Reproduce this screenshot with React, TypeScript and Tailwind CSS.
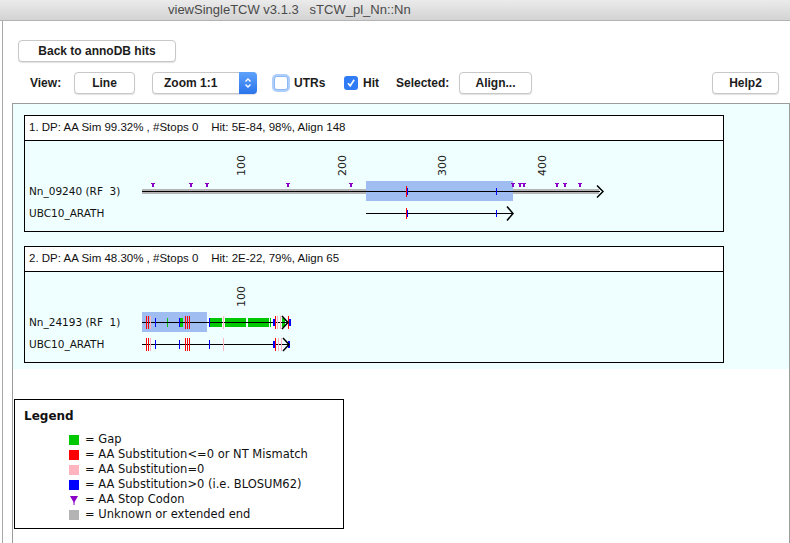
import React from "react";

const PURPLE = "#8a00c8";
const RED = "#ff0000";
const PINK = "#ffb4c0";
const BLUE = "#0000ff";
const GREEN = "#00c800";

function Btn({ children, className }: { children: React.ReactNode; className?: string }) {
  return (
    <button
      className={`h-[22px] bg-white border border-[#c8c8c8] rounded-[4px] shadow-[0_1px_1px_rgba(0,0,0,0.12)] text-[12px] font-bold text-[#1c1c1c] flex items-center justify-center ${className ?? ""}`}
    >
      {children}
    </button>
  );
}

function VTicks({ xs, y1, y2, color, w = 1 }: { xs: number[]; y1: number; y2: number; color: string; w?: number }) {
  return (
    <>
      {xs.map((x, i) => (
        <rect key={i} x={x} y={y1} width={w} height={y2 - y1} fill={color} />
      ))}
    </>
  );
}

// little purple "T" marks for stop codons
function Stops({ xs }: { xs: number[] }) {
  return (
    <>
      {xs.map((x, i) => (
        <g key={i} fill={PURPLE}>
          <rect x={x - 1} y={184} width={4} height={1} />
          <rect x={x} y={184} width={2} height={4} />
        </g>
      ))}
    </>
  );
}

function Ruler({ marks }: { marks: [string, number, number][] }) {
  return (
    <>
      {marks.map(([t, x, y]) => (
        <text key={t} transform={`translate(${x},${y}) rotate(-90)`} fontSize={11} fill="#222">
          {t}
        </text>
      ))}
    </>
  );
}

function Track1() {
  return (
    <svg width={698} height={90} viewBox="25 142 698 90" className="block font-['DejaVu_Sans',sans-serif]">
      <text x={29} y={196} fontSize={10.5} fill="#111" className="whitespace-pre">Nn_09240 (RF  3)</text>
      <text x={29} y={218} fontSize={10.5} fill="#111">UBC10_ARATH</text>
      <Ruler marks={[["100", 245, 177], ["200", 346, 177], ["300", 446, 177], ["400", 546, 177]]} />
      <rect x={142} y={190} width={224} height={5} fill="#b4b4b4" />
      <rect x={513} y={190} width={86} height={5} fill="#b4b4b4" />
      <rect x={366} y={182} width={147} height={20} fill="#9fbdf0" />
      <rect x={142} y={192} width={458} height={1} fill="#000" />
      <polyline points="597,186.5 603,192.5 597,198.5" stroke="#000" strokeWidth={1.5} fill="none" />
      <Stops xs={[152, 190, 206, 287, 350, 512, 519, 523, 556, 564, 579]} />
      <VTicks xs={[406]} y1={187} y2={198} color={RED} />
      <VTicks xs={[407]} y1={189} y2={196} color={BLUE} />
      <VTicks xs={[496]} y1={189} y2={196} color={BLUE} />

      <rect x={366} y={214} width={147} height={1} fill="#000" />
      <polyline points="507,207.5 513,214.5 507,221.5" stroke="#000" strokeWidth={1.5} fill="none" />
      <VTicks xs={[406]} y1={209} y2={220} color={RED} />
      <VTicks xs={[407]} y1={211} y2={218} color={BLUE} />
      <VTicks xs={[496]} y1={211} y2={218} color={BLUE} />
    </svg>
  );
}

function Track2() {
  return (
    <svg width={698} height={90} viewBox="25 274 698 90" className="block font-['DejaVu_Sans',sans-serif]">
      <text x={29} y={328} fontSize={10.5} fill="#111" className="whitespace-pre">Nn_24193 (RF  1)</text>
      <text x={29} y={350} fontSize={10.5} fill="#111">UBC10_ARATH</text>
      <Ruler marks={[["100", 245, 309]]} />
      <rect x={142} y={314} width={65} height={20} fill="#9fbdf0" />
      <rect x={210} y={320} width={12} height={9} fill={GREEN} />
      <rect x={225} y={320} width={21} height={9} fill={GREEN} />
      <rect x={248} y={320} width={21} height={9} fill={GREEN} />
      <rect x={180} y={320} width={3} height={9} fill={GREEN} />
      <rect x={282} y={320} width={3} height={9} fill={GREEN} />
      <VTicks xs={[167, 270]} y1={320} y2={329} color={GREEN} />
      <rect x={142} y={324} width={146} height={1} fill="#000" />
      <VTicks xs={[146, 148, 185, 187, 189, 275, 288]} y1={318} y2={331} color={RED} />
      <VTicks xs={[150, 223, 277, 280]} y1={318} y2={331} color={PINK} />
      <VTicks xs={[155, 179, 209]} y1={320} y2={329} color={BLUE} />
      <VTicks xs={[273, 289]} y1={321} y2={328} color={BLUE} w={2} />
      <polyline points="282,318 288,324.5 282,331" stroke="#000" strokeWidth={1.5} fill="none" />

      <rect x={142} y={346} width={146} height={1} fill="#000" />
      <VTicks xs={[146, 148, 185, 187, 189, 275]} y1={340} y2={353} color={RED} />
      <VTicks xs={[150, 223, 278, 281]} y1={340} y2={353} color={PINK} />
      <VTicks xs={[155, 179, 209]} y1={342} y2={351} color={BLUE} />
      <VTicks xs={[273, 288]} y1={343} y2={350} color={BLUE} w={2} />
      <polyline points="283,340 289,346.5 283,353" stroke="#000" strokeWidth={1.5} fill="none" />
    </svg>
  );
}

function Card({ title, children }: { title: string; children: React.ReactNode }) {
  return (
    <div className="w-[700px] border border-black bg-[#efffff]">
      <div className="h-[25px] border-b border-black bg-white pl-[4px] flex items-center text-[11.5px] text-[#111] whitespace-pre">
        {title}
      </div>
      {children}
    </div>
  );
}

const legend: { color: string; label: string; stop?: boolean }[] = [
  { color: "bg-[#00c800]", label: "= Gap" },
  { color: "bg-[#ff0000]", label: "= AA Substitution<=0 or NT Mismatch" },
  { color: "bg-[#ffb4c0]", label: "= AA Substitution=0" },
  { color: "bg-[#0000ff]", label: "= AA Substitution>0 (i.e. BLOSUM62)" },
  { color: "", label: "= AA Stop Codon", stop: true },
  { color: "bg-[#b4b4b4]", label: "= Unknown or extended end" },
];

export default function App() {
  return (
    <div className="w-[790px] h-[543px] overflow-hidden bg-white flex flex-col font-['Liberation_Sans',Arial,sans-serif]">
      <div className="h-[21px] shrink-0 bg-gradient-to-b from-[#ebebeb] to-[#d3d3d3] border-b border-[#b3b3b3] pl-[168px] flex items-center text-[13px] text-[#4a4a4a] whitespace-pre">
        viewSingleTCW v3.1.3   sTCW_pl_Nn::Nn
      </div>

      <div className="flex-1 ml-[2px] border-l border-[#a8a8a8] flex flex-col min-h-0">
        <Btn className="mt-[19px] ml-[15px] w-[158px]">Back to annoDB hits</Btn>

        <div className="mt-[10px] h-[22px] flex items-center pl-[27px] pr-[11px] text-[12px] font-bold text-[#1c1c1c]">
          <span className="w-[44px]">View:</span>
          <Btn className="w-[61px]">Line</Btn>
          <div className="ml-[17px] w-[105px] h-[22px] bg-white border border-[#c8c8c8] rounded-[4px] shadow-[0_1px_1px_rgba(0,0,0,0.12)] flex items-stretch">
            <span className="flex-1 pl-[11px] flex items-center">Zoom 1:1</span>
            <span className="w-[18px] -my-px -mr-px rounded-r-[4px] bg-gradient-to-b from-[#5fa2fb] to-[#2a74ec] flex items-center justify-center">
              <svg width="8" height="12" viewBox="0 0 8 12" fill="none" stroke="#fff" strokeWidth="1.4">
                <polyline points="1.5,4.5 4,2 6.5,4.5" />
                <polyline points="1.5,7.5 4,10 6.5,7.5" />
              </svg>
            </span>
          </div>
          <span className="ml-[17px] w-[14px] h-[14px] rounded-[3px] bg-white border border-[#8cb8f6] shadow-[0_0_0_2px_rgba(110,165,245,0.55)]" />
          <span className="ml-[6px] w-[50px]">UTRs</span>
          <span className="w-[14px] h-[14px] rounded-[3px] bg-[#2f7cf6] flex items-center justify-center">
            <svg width="10" height="10" viewBox="0 0 10 10" fill="none" stroke="#fff" strokeWidth="1.6">
              <polyline points="2,5.2 4.2,7.8 8.2,1.8" />
            </svg>
          </span>
          <span className="ml-[5px] w-[33px]">Hit</span>
          <span className="w-[63px]">Selected:</span>
          <Btn className="w-[73px]">Align...</Btn>
          <Btn className="ml-auto w-[67px]">Help2</Btn>
        </div>

        <div className="mt-[9px] ml-[9px] flex-1 border border-[#9c9c9c] border-b-0 flex flex-col">
          <div className="h-[265px] bg-[#efffff] pl-[11px] pt-[11px] flex flex-col gap-[14px]">
            <Card title="1. DP: AA Sim 99.32% , #Stops 0    Hit: 5E-84, 98%, Align 148">
              <Track1 />
            </Card>
            <Card title="2. DP: AA Sim 48.30% , #Stops 0    Hit: 2E-22, 79%, Align 65">
              <Track2 />
            </Card>
          </div>

          <div className="mt-[30px] ml-[1px] w-[330px] h-[130px] border border-black pt-[9px] pl-[9px] font-['DejaVu_Sans',sans-serif] text-[#111]">
            <div className="text-[12px] font-bold leading-[15px]">Legend</div>
            <div className="mt-[8px] ml-[45px] flex flex-col">
              {legend.map((l) => (
                <div key={l.label} className="h-[15px] flex items-center text-[11.5px] whitespace-pre">
                  {l.stop ? (
                    <svg width="10" height="10" viewBox="0 0 10 10" className="shrink-0">
                      <polygon points="1,1 9,1 5,8" fill={PURPLE} />
                      <rect x="4.5" y="7" width="1" height="3" fill={PURPLE} />
                    </svg>
                  ) : (
                    <span className={`w-[10px] h-[10px] shrink-0 ${l.color}`} />
                  )}
                  <span className="ml-[6px]">{l.label}</span>
                </div>
              ))}
            </div>
          </div>
        </div>
      </div>
    </div>
  );
}
